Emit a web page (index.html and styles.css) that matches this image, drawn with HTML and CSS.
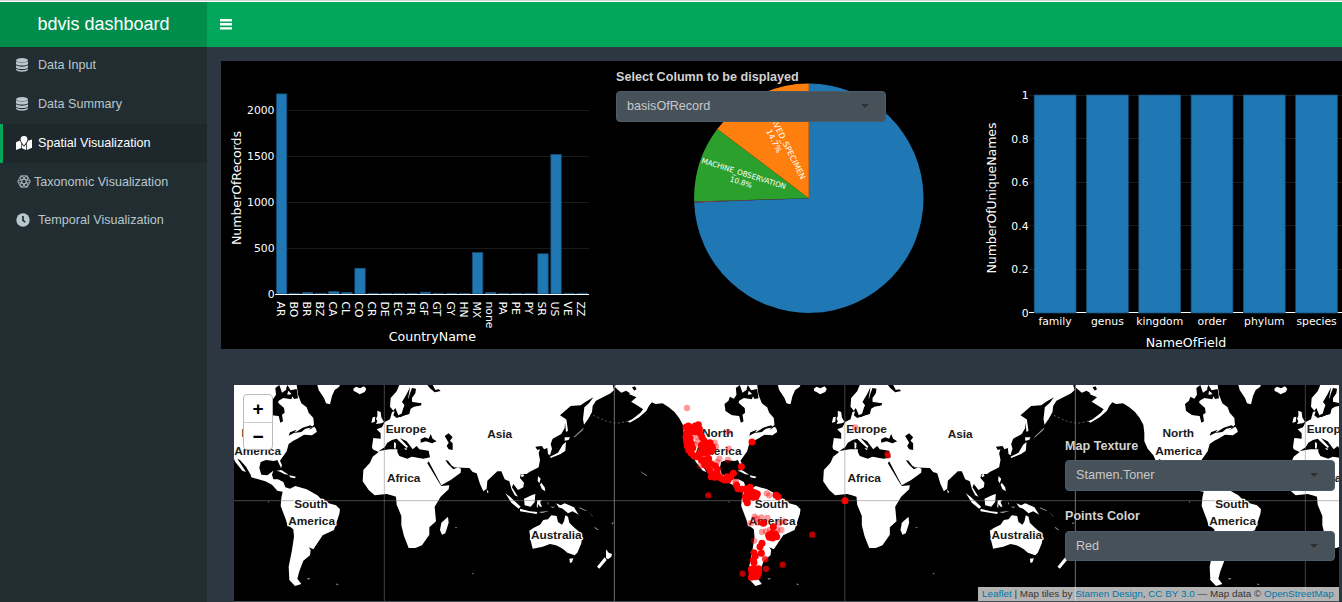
FILE: index.html
```html
<!DOCTYPE html>
<html lang="en">
<head>
<meta charset="utf-8">
<title>bdvis dashboard</title>
<link rel="stylesheet" href="styles.css">
</head>
<body>
<header class="header">
  <div class="logo">bdvis dashboard</div>
  <nav class="navbar">
    <svg class="bars" viewBox="0 0 12 11"><path d="M0 0h12v2.4H0zM0 4.1h12v2.4H0zM0 8.2h12v2.4H0z"/></svg>
  </nav>
</header>
<div class="layout">
  <aside class="sidebar">
    <a class="item"><svg class="icon" viewBox="0 0 12 14"><g fill="#b8c7ce"><ellipse cx="6" cy="2.2" rx="6" ry="2.2"/><path d="M0 3.3c2 1.9 10 1.9 12 0v2.6c-1 2-11 2-12 0zM0 7.2c2 1.9 10 1.9 12 0v2.3c-1 2-11 2-12 0zM0 10.8c2 1.9 10 1.9 12 0v1c-1 2.6-11 2.6-12 0z"/></g></svg><span>Data Input</span></a>
    <a class="item"><svg class="icon" viewBox="0 0 12 14"><g fill="#b8c7ce"><ellipse cx="6" cy="2.2" rx="6" ry="2.2"/><path d="M0 3.3c2 1.9 10 1.9 12 0v2.6c-1 2-11 2-12 0zM0 7.2c2 1.9 10 1.9 12 0v2.3c-1 2-11 2-12 0zM0 10.8c2 1.9 10 1.9 12 0v1c-1 2.6-11 2.6-12 0z"/></g></svg><span>Data Summary</span></a>
    <a class="item active"><svg class="icon wide" viewBox="0 0 16 14"><path fill="#fff" d="M8 0a3.4 3.4 0 0 1 3.4 3.4C11.400 5.500 8 9.200 8 9.200S4.600 5.500 4.600 3.400A3.400 3.400 0 0 1 8 0zM0 6.200 4 4.600c.3 1 .8 2 1.300 2.800V12L0 14zM6 8.500 8 10.700l2-2.200V14l-4-1.800zM10.800 7.400c.6-.9 1-1.800 1.200-2.600L16 3.600v8.200L10.800 14z"/></svg><span>Spatial Visualization</span></a>
    <a class="item tight"><svg class="icon react" viewBox="0 0 14 13"><g fill="none" stroke="#a3b2b9" stroke-width=".9"><path d="M3.700.8h6.600l3 5.700-3 5.700H3.700l-3-5.700z"/><ellipse cx="7" cy="6.500" rx="5.600" ry="2.100"/><ellipse cx="7" cy="6.500" rx="5.600" ry="2.100" transform="rotate(60 7 6.500)"/><ellipse cx="7" cy="6.500" rx="5.600" ry="2.100" transform="rotate(120 7 6.500)"/></g></svg><span>Taxonomic Visualization</span></a>
    <a class="item"><svg class="icon clock" viewBox="0 0 14 14"><circle cx="7" cy="7" r="6.700" fill="#b8c7ce"/><path d="M7 3v4.300l2.200 1.900" fill="none" stroke="#222d32" stroke-width="1.700"/></svg><span>Temporal Visualization</span></a>
  </aside>
  <main class="content">
    <section class="charts">
      <svg id="countries" class="plot countries" viewBox="221 61 380 288"></svg>
      <div class="pie">
        <svg id="basis" class="plot" viewBox="601 61 370 288"></svg>
        <div class="pie-control">
          <label class="label">Select Column to be displayed</label>
          <div class="select">basisOfRecord<i class="caret"></i></div>
        </div>
      </div>
      <svg id="names" class="plot names" viewBox="971 61 371 288"></svg>
    </section>
    <section class="map">
      <svg id="map" class="world" viewBox="12 15 3315 648" preserveAspectRatio="none">
        <defs>
          <g id="land">
            <g transform="translate(-613 0)">
              <path class="l" d="M-25 0-12 28-35 42-12 52-28 65-12 75 8 88 0 98-25 118-38 124-32 128-4 112 18 92 25 78 34 67 45 72 66 70 85 82 102 96 116 114 127 134 130 160 130 184 140 206 157 226 166 246 187 272 198 276 184 254 172 236 180 240 198 260 212 284 214 292 256 304 276 314 292 332 308 335 304 354 302 378 318 420 322 434 340 448 342 470 336 510 326 560 328 600 345 618 364 612 352 596 358 574 370 542 390 526 392 510 386 502 400 508 412 490 428 466 462 450 470 426 478 402 480 388 468 376 432 366 412 346 380 328 346 318 330 326 316 322 310 306 294 298 280 298 276 284 280 272 262 286 244 284 238 264 242 246 258 240 282 243 292 240 303 264 306 256 300 242 310 228 320 214 326 192 340 182 352 176 372 164 396 166 410 156 404 140 386 150 402 134 400 114 386 98 380 82 364 70 354 44 348 0z"/>
              <path class="w" d="M286 24 298 15 306 38 326 24 322 44 340 42 334 58 310 54 296 62 292 76 312 84 314 98 306 104 309 124 301 128 296 108 276 106 255 92 252 72 264 62 268 50 280 56 288 44zM322 15l10 16 18-4 4 28-12 2-10-18-14-12z"/>
              <path class="w" d="M262 70 292 66 312 84 312 98 296 106 272 104 255 92zM348 156l20-13 24-7 6 6-22 4-12 10-28 4zM330 157l20-8-8 10-16 8z"/>
              <path class="l" d="M398 142l10 4 2 10-14-2zM408 0 416 30 432 54 438 70 450 73 456 48 464 30 478 20 484 0zM520 26l8-6 12 5 12-6 7 8-5 9-15 7-11-7-7-3zM290 272l14-2 22 14-12-1-14-8zM328 286l20 4-4 5-14-3z"/>
              <path class="l dim" d="M264 363l4 4-3 1zM384 596l8-2-4 4zM470 610l6 5-4-1zM16 284l4 3-3 1z"/>
            </g>
            <g transform="translate(-463 0)">
              <path class="l" d="M514 0 500 34 482 54 480 80 490 92 496 84 506 108 514 104 520 84 524 76 516 66 530 42 540 22 534 58 548 66 572 70 566 78 540 78 534 102 500 114 490 106 494 94 486 96 480 118 464 126 456 142 440 148 452 160 452 176 430 174 426 200 428 208 446 216 428 230 420 248 400 270 398 304 416 330 434 346 470 342 484 346 498 350 500 374 514 408 514 436 522 468 536 504 556 504 576 496 598 464 598 442 618 424 614 380 632 350 656 328 658 316 634 318 626 306 592 250 596 244 634 316 662 300 692 278 693 266 682 262 730 262 730 0z"/>
              <path class="w" d="M546 24 558 26 556 40 546 54 546 68 574 69 574 76 552 80 542 86 538 102 524 106 510 112 504 106 518 100 524 76 520 68 536 54 540 40z"/>
              <path class="w" d="M446 213 464 202 472 188 486 180 500 176 514 190 530 204 534 200 510 174 530 184 548 208 560 198 568 208 596 212 600 232 580 236 545 230 532 236 508 228 502 216 502 208 478 208zM572 178 584 172 596 176 602 162 608 176 620 184 606 190 588 184 572 188zM644 168 656 160 668 172 660 182 668 190 668 210 656 208 650 198 656 188zM646 240l8 2 12 16 18 4-14 6-16-16zM592 15l8 10 14 12 18-4-6-5-10 2-8-15z"/>
              <path class="l" d="M442 92l10 4 2 16 8 14-8 4-16 2 4-8-4-8 4-8zM428 112l8-2-2 16-10 2zM522 204l10 2-4 5zM492 186l6 4-1 16-5-1zM550 232l8 1-5 3z"/>
              <path class="l" d="M654 410l2 18-10 32-10 4-6-14 4-22z"/>
              <path class="l dim" d="M230 596l8-2-2 5zM318 610l6 5-5-1zM674 442l8-1-4 4z"/>
            </g>
            <g transform="translate(227 0)">
              <path class="l" d="M-20 0H454L462 30 452 40 408 62 398 78 396 96 384 118 372 134 369 118 373 82 388 68 400 52 376 66 362 76 332 78 300 106 316 116 314 144 304 162 278 176 272 192 276 206 270 226 264 222 262 204 252 208 246 198 226 200 232 210 240 208 236 220 240 240 236 262 208 276 200 282 182 282 180 294 192 308 190 322 174 330 160 312 156 322 174 350 164 346 154 326 148 304 134 298 124 274 112 274 82 302 80 326 70 334 60 312 50 280 38 276 28 264-20 262zM314 116l5 2 5 34-6 4zM314 172l16 0-4 8-12 2zM318 186l-2 26-14 10-30 12-2-4 24-12 14-24zM182 284l8-2 2 6-7 4zM234 288l8 8-4 14-5-8zM244 308l10 14 2 12-10-6-6-14zM80 328l6 8-4 4zM136 340l14 10 32 30-6 6-22-18zM180 386l30 8 22 2-2 6-50-8zM192 356l26-12 8-2-2 24-12 14-18-4zM232 360l14 0-6 6 6 14-6 0-6-8-1 12-3-4zM288 370l14 6 12-6 28 12 14 22-18-10-14 6-16-14-12-4z"/>
              <path class="l dim" d="M236 396l32-4-22 8zM262 366l4 4-2 6zM270 380l16 0-8 4zM358 382l24 10-6 0-18-7zM386 396l14 14-4-2zM404 440l12 10-4 0-8-6zM454 430l8-4-4 7zM490 415l8 3zM540 273l20 12-1 2-12-7zM36 579l8 2-6 2zM340 172l32-30-4 9-24 21z"/>
              <path d="M400 106 440 124 470 130 508 123" fill="none" stroke="#fff" stroke-opacity=".45" stroke-width="2.500" stroke-dasharray="6 7"/>
              <path class="l" d="M208 452 220 444 240 434 250 420 264 418 274 406 290 408 294 426 306 434 312 424 316 406 324 410 328 428 340 440 358 456 366 474 364 490 352 518 344 526 322 518 310 508 300 502 288 496 270 492 248 500 218 506 212 482zM328 536l12-1-4 12-6 2zM438 508l8 10 10 4-2 8-10 8-6-4zM434 532l6 8-22 26-7-6z"/>
              <path class="l" d="M464 20l10-16 60 0 2 12-20 6 8 12-10 8-16-10-14 6-14-12zM526 58l10-6-4 9z"/>
            </g>
          </g>
        </defs>
        <rect x="0" y="0" width="3400" height="700" fill="#000"/>
        <use href="#land" x="-919"/><use href="#land" x="463"/><use href="#land" x="1844.500"/><use href="#land" x="3226"/>
      </svg>
      <div class="zoom"><span>+</span><span>−</span></div>
      <div class="map-controls">
        <label class="label">Map Texture</label>
        <div class="select">Stamen.Toner<i class="caret"></i></div>
        <label class="label second">Points Color</label>
        <div class="select">Red<i class="caret"></i></div>
      </div>
      <div class="attribution"><a>Leaflet</a> | Map tiles by <a>Stamen Design</a>, <a>CC BY 3.0</a> — Map data © <a>OpenStreetMap</a></div>
    </section>
  </main>
</div>
<script src="charts.js"></script>
</body>
</html>
```
FILE: styles.css
```css
* { box-sizing: border-box; }
body {
  margin: 0;
  height: 602px;
  overflow: hidden;
  background: #2d3741;
  font-family: "Liberation Sans", Arial, sans-serif;
  font-size: 12.6px;
  color: #c8c8c8;
}
.header { display: flex; height: 47px; border-top: 1px solid #d5d5d5; box-shadow: inset 0 1px #fff; }
.logo {
  width: 207px;
  margin-top: 1px;
  background: #008d4c;
  color: #fff;
  font-size: 18px;
  line-height: 44px;
  text-align: center;
}
.navbar { flex: 1; margin-top: 1px; background: #00a65a; padding: 17px 13px; }
.bars { display: block; width: 12px; height: 11px; fill: #fff; }
.layout { display: flex; height: 555px; }
.sidebar { width: 207px; background: #222d32; }
.item {
  display: flex;
  align-items: center;
  height: 38.5px;
  padding: 0 0 2px 13px;
  border-left: 3px solid transparent;
  color: #b8c7ce;
}
.item span { white-space: nowrap; }
.icon { width: 12px; height: 14px; margin-right: 10px; }
.icon.wide { width: 16px; margin-right: 6px; }
.icon.clock { width: 14px; margin-right: 8px; }
.item.tight { padding-top: 1px; }
.icon.react { width: 14px; height: 13px; margin: 0 3px 0 1px; }
.item.active { background: #1e282c; border-left-color: #00a65a; color: #fff; height: 39px; }
.content { flex: 1; min-width: 0; padding: 14px 0 0 14px; }
.charts { display: flex; height: 288px; background: #000; }
.plot { display: block; height: 288px; font-family: "DejaVu Sans", Verdana, sans-serif; font-size: 10.8px; fill: #fff; }
.countries { width: 380px; }
.pie { position: relative; width: 370px; }
.pie .plot { width: 370px; }
.names { width: 371px; }
.title { font-size: 12.6px; }
.grid { stroke: #1a1a1a; }
.axis { stroke: #fff; }
.bar { fill: #1f77b4; stroke: #184f78; stroke-width: .7; }
.pie-control { position: absolute; left: 15px; top: 9px; width: 270px; }
.label { display: block; height: 21px; line-height: 15px; font-weight: bold; color: #d2d2d2; white-space: nowrap; }
.select {
  position: relative;
  height: 31px;
  padding-left: 10px;
  border: 1px solid #4d5b68;
  border-radius: 4px;
  background: #46515a;
  line-height: 28px;
  color: #c8c8c8;
}
.caret { position: absolute; right: 16px; top: 12px; border: 4.5px solid transparent; border-top-color: #303030; border-bottom: 0; }
.map { position: relative; width: 1105px; height: 217px; margin: 36px 0 0 13px; border-bottom: 1px solid #4a4f54; overflow: hidden; }
.world { display: block; width: 1105px; height: 216px; }
.l { fill: #fff; }
.w { fill: #000; }
.dim { opacity: .6; }
.place { font: bold 35.5px "Liberation Sans", Arial, sans-serif; fill: #1a1a1a; stroke: #fff; stroke-width: 8px; stroke-linejoin: round; paint-order: stroke; text-anchor: middle; }
.zoom {
  position: absolute;
  left: 9px;
  top: 9px;
  width: 30px;
  height: 56px;
  border: 1px solid #bbb;
  border-radius: 4px;
  background: #fff;
  color: #000;
  font: bold 19px/27px "Liberation Sans", Arial, sans-serif;
  text-align: center;
}
.zoom span { display: block; height: 27px; }
.zoom span + span { border-top: 1px solid #ccc; }
.map-controls { position: absolute; left: 831px; top: 54px; width: 270px; }
.second { margin-top: 18px; height: 22px; }
.map-controls .select + .label + .select { height: 30px; }
.attribution {
  position: absolute;
  right: 0;
  bottom: 0;
  width: 361px;
  height: 14px;
  padding-left: 4px;
  background: rgba(255, 255, 255, .7);
  color: #333;
  font-size: 9.9px;
  line-height: 14px;
  white-space: nowrap;
}
.attribution a { color: #0078a8; }
```
FILE: charts.js
```javascript
const NS = "http://www.w3.org/2000/svg";
function add(parent, tag, attrs, text) {
  const el = document.createElementNS(NS, tag);
  for (const key in attrs) el.setAttribute(key, attrs[key]);
  if (text) el.textContent = text;
  parent.appendChild(el);
  return el;
}

// Records per country
const countries = document.getElementById("countries");
[500, 1000, 1500, 2000].forEach(v => {
  const y = Math.round(294 - v * 0.092) + 0.5;
  add(countries, "path", { d: `M275 ${y}H589`, class: "grid" });
});
[0, 500, 1000, 1500, 2000].forEach(v =>
  add(countries, "text", { x: 274.5, y: 298 - v * 0.092, "text-anchor": "end" }, String(v)));
const records = { AR: 2175, BO: 8, BR: 18, BZ: 8, CA: 28, CL: 18, CO: 280, CR: 8, DE: 8, EC: 8, FR: 8, GF: 20,
  GT: 8, GY: 8, HN: 8, MX: 450, none: 18, PA: 8, PE: 8, PY: 8, SR: 437, US: 1517, VE: 8, ZZ: 8 };
Object.keys(records).forEach((name, i) => {
  const x = 281.600 + i * 13.070, h = records[name] * 0.092;
  add(countries, "rect", { x: x - 5.200, y: 294 - h, width: 10.400, height: h, class: "bar" });
  add(countries, "text", { transform: `translate(${x - 5} 301.500) rotate(90)` }, name);
});
add(countries, "path", { d: "M275 294.500H589", class: "axis" });
add(countries, "text", { x: 432.300, y: 341, "text-anchor": "middle", class: "title" }, "CountryName");
add(countries, "text", { transform: "translate(241 188) rotate(-90)", "text-anchor": "middle", class: "title", textLength: 114 }, "NumberOfRecords");

// Share of records by basis
const basis = document.getElementById("basis");
function slice(from, to, fill) {
  const p = a => `${808.800 + 114.700 * Math.sin(a * Math.PI / 180)} ${198.200 - 114.700 * Math.cos(a * Math.PI / 180)}`;
  add(basis, "path", { d: `M808.800 198.200L${p(from)}A114.700 114.700 0 ${to - from > 180 ? 1 : 0} 1 ${p(to)}Z`, fill });
}
slice(0, 267.900, "#1f77b4");
slice(267.900, 268.400, "#a04060");
slice(268.400, 307.100, "#2ca02c");
slice(307.100, 360, "#ff7f0e");
const orange = add(basis, "g", { transform: "translate(801 180) rotate(63.500)", "font-size": 7.900 });
add(orange, "text", { "text-anchor": "end", textLength: 93, lengthAdjust: "spacingAndGlyphs" }, "PRESERVED_SPECIMEN");
add(orange, "text", { x: -47, y: 9.500, "text-anchor": "middle" }, "14.7%");
const green = add(basis, "g", { transform: "translate(743 176) rotate(17.500)", "font-size": 7.400 });
add(green, "text", { "text-anchor": "middle", textLength: 88, lengthAdjust: "spacingAndGlyphs" }, "MACHINE_OBSERVATION");
add(green, "text", { y: 9, "text-anchor": "middle", textLength: 23 }, "10.8%");

// Unique names per field
const names = document.getElementById("names");
["0", "0.2", "0.4", "0.6", "0.8", "1"].forEach((v, i) => {
  const y = Math.round(312.500 - i * 43.600) + 0.5;
  if (i) add(names, "path", { d: `M1029 ${y}H1342`, class: "grid" });
  add(names, "text", { x: 1028.500, y: 317 - i * 43.600, "text-anchor": "end" }, v);
});
add(names, "path", { d: "M1029 312.500H1342", class: "axis" });
["family", "genus", "kingdom", "order", "phylum", "species"].forEach((name, i) => {
  const x = 1055.100 + i * 52.300;
  add(names, "rect", { x: x - 20.900, y: 95, width: 41.800, height: 218, class: "bar" });
  add(names, "text", { x, y: 325, "text-anchor": "middle" }, name);
});
add(names, "text", { x: 1186, y: 347, "text-anchor": "middle", class: "title" }, "NameOfField");
add(names, "text", { transform: "translate(995.500 198) rotate(-90)", "text-anchor": "middle", class: "title", textLength: 151 }, "NumberOfUniqueNames");

// Graticule, place names and occurrence points
const map = document.getElementById("map");
[463, 1153, 1844.500, 2536, 3226].forEach((x, i) =>
  add(map, "path", { d: `M${x} 0V700`, stroke: "#808080", "stroke-opacity": i % 2 ? 0.9 : 0.5, "stroke-width": 3 }));
add(map, "path", { d: "M0 362H3400", stroke: "#808080", "stroke-opacity": 0.55, "stroke-width": 3 });
const places = [["North", -381, 172], ["America", -380, 224], ["South", -220, 383], ["America", -218, 434],
  ["Europe", 65, 158], ["Africa", 58, 305], ["Asia", 346, 174], ["Australia", 516, 476]];
[463, 1844.500, 3226].forEach(origin => places.forEach(([name, x, y]) => {
  if (origin + x < 3400) add(map, "text", { x: origin + x, y, class: "place" }, name);
}));
const solid = [[138,142],[145,138],[155,145],[165,138],[175,134],[178,146],[140,160],[150,158],[165,155],[138,172],[140,185],
  [142,198],[146,210],[154,220],[162,228],[150,175],[154,190],[158,204],[180,160],[186,172],[192,182],[200,190],[210,188],[216,200],
  [206,206],[196,206],[186,208],[184,196],[178,222],[190,220],[202,220],[214,214],[218,206],[172,230],[184,240],[196,240],[206,236],
  [194,254],[204,260],[214,252],[226,258],[232,268],[210,272],[220,282],[232,282],[214,290],[224,292],[238,292],[246,296],[254,300],
  [264,300],[272,292],[280,280],[262,290],[290,316],[294,326],[306,328],[318,326],[330,322],[322,338],[334,334],[344,338],[352,342],
  [316,350],[328,350],[340,352],[348,350],[318,360],[322,368],[336,186],[304,260],[408,346],[414,350],[386,466],[396,460],[406,462],
  [410,470],[398,474],[388,472],[400,440],[366,490],[360,500],[364,520],[342,518],[346,528],[340,540],[342,548],[334,568],[346,568],
  [356,566],[336,580],[348,580],[356,578],[334,592],[346,590],[352,588],[370,430],[615,362]];
const faint = [[141,84],[168,170],[174,184],[164,194],[224,188],[228,200],[238,236],[232,246],[264,156],[266,206],[264,240],[180,258],
  [288,304],[286,310],[380,340],[388,346],[344,410],[350,416],[364,412],[382,414],[356,428],[366,456],[378,454],[390,450],[412,450],
  [424,450],[418,430],[432,424],[342,482],[646,142],[332,430],[374,536]];
const medium = [[205,346],[517,464],[428,554],[308,581],[378,567],[376,538]];
[[faint, 0.4, 9.500], [solid, 1, 10.500], [medium, 0.7, 9.500]].forEach(([points, opacity, r]) => points.forEach(([x, y]) =>
  add(map, "circle", { cx: x + 1230, cy: y, r, fill: "#f00", "fill-opacity": opacity })));
[[1972, 222], [1974, 227]].forEach(([cx, cy]) => add(map, "circle", { cx, cy, r: 9, fill: "#f00", "fill-opacity": 0.6 }));
```
